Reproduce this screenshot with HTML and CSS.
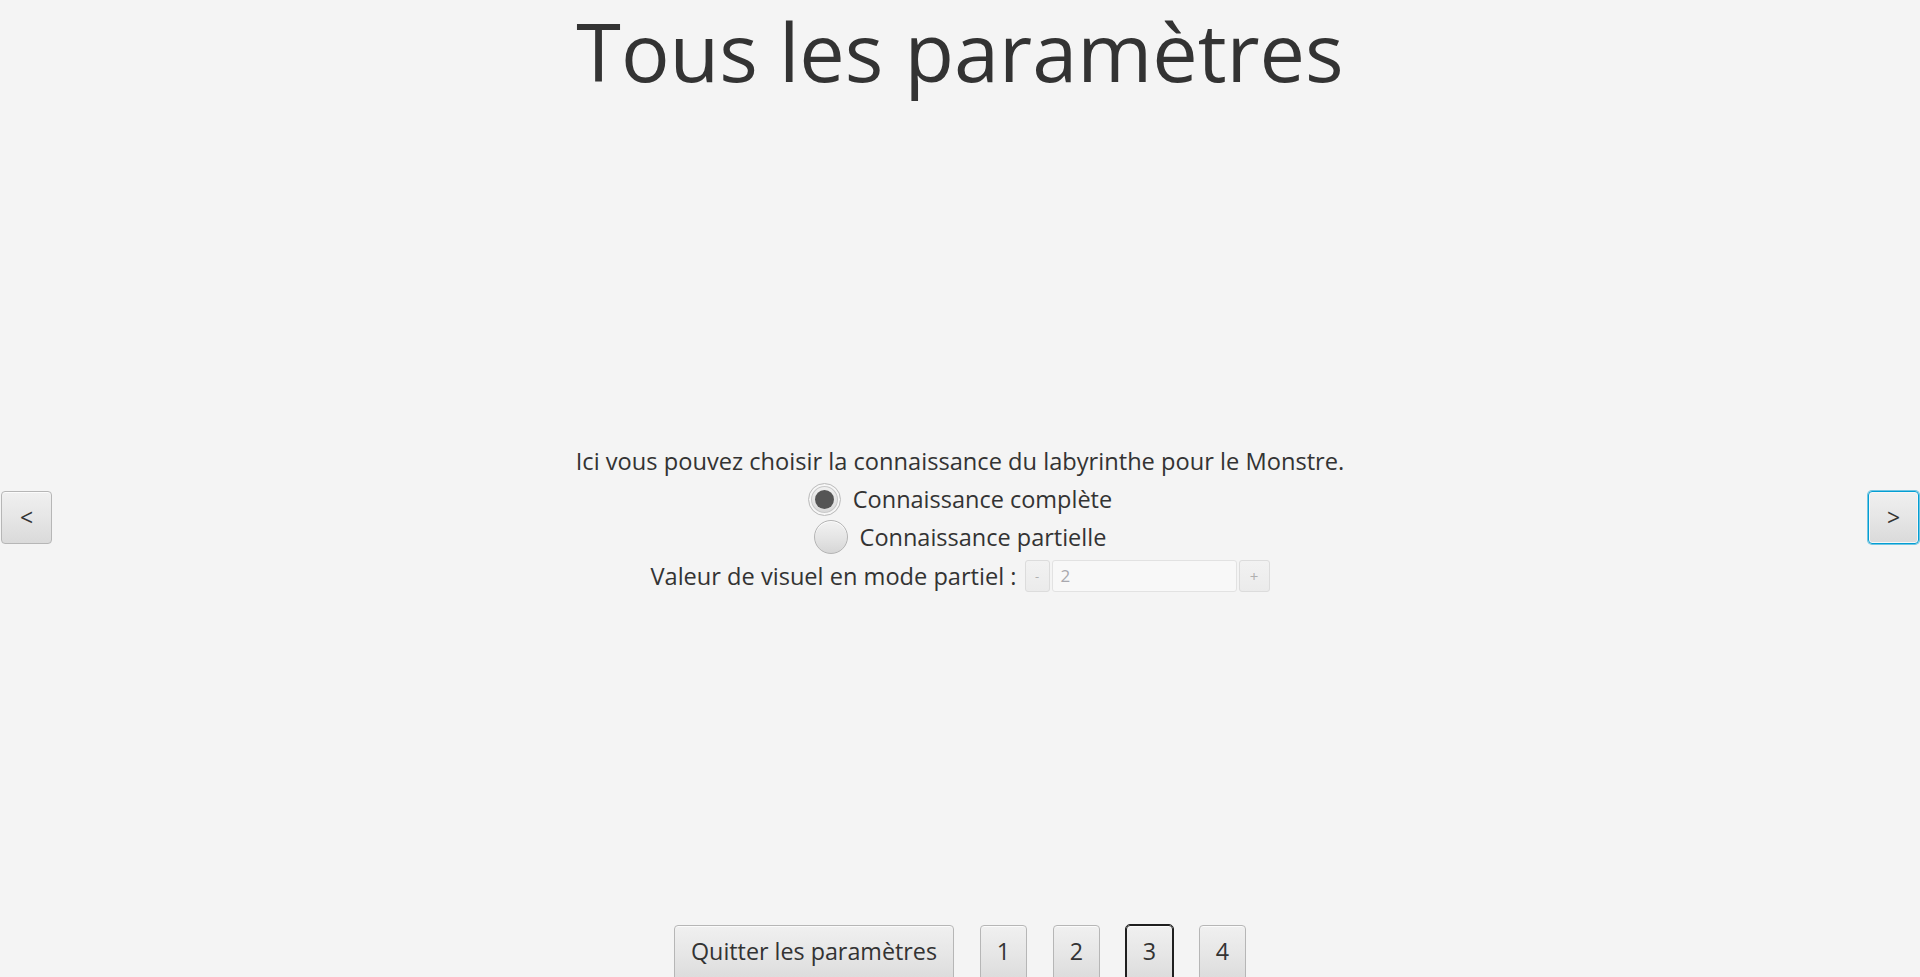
FILE: index.html
```html
<!DOCTYPE html>
<html lang="fr">
<head>
<meta charset="utf-8">
<title>Tous les paramètres</title>
<link rel="stylesheet" href="styles.css">
</head>
<body>
<div class="page">
  <header class="header">
    <h1 class="title">Tous les paramètres</h1>
  </header>
  <main class="middle">
    <button class="btn nav nav-left">&lt;</button>
    <section class="settings">
      <p class="intro">Ici vous pouvez choisir la connaissance du labyrinthe pour le Monstre.</p>
      <label class="radio-row row-complete">
        <span class="radio radio-focused"><span class="dot"></span></span>
        <span class="radio-label">Connaissance complète</span>
      </label>
      <label class="radio-row row-partial">
        <span class="radio"></span>
        <span class="radio-label">Connaissance partielle</span>
      </label>
      <div class="spinner-row">
        <span class="spinner-label">Valeur de visuel en mode partiel :</span>
        <div class="spinner">
          <span class="spin-btn spin-minus">-</span>
          <span class="spin-field">2</span>
          <span class="spin-btn spin-plus">+</span>
        </div>
      </div>
    </section>
    <button class="btn nav nav-right">&gt;</button>
  </main>
  <footer class="footer">
    <button class="btn foot-btn">Quitter les paramètres</button>
    <button class="btn foot-btn num">1</button>
    <button class="btn foot-btn num">2</button>
    <button class="btn foot-btn num current">3</button>
    <button class="btn foot-btn num">4</button>
  </footer>
</div>
</body>
</html>
```

FILE: styles.css
```css
html, body {
  margin: 0;
  padding: 0;
  background: #f4f4f4;
}

body {
  font-family: "Open Sans", "Noto Sans", sans-serif;
  color: #333333;
}

.page {
  height: 977px;
  display: flex;
  flex-direction: column;
  overflow: hidden;
}

.header {
  height: 110px;
  flex: 0 0 110px;
  display: flex;
  justify-content: center;
  align-items: flex-start;
}

.title {
  margin: 0;
  font-weight: 400;
  font-size: 81px;
  line-height: 102px;
  color: #333333;
}

.middle {
  flex: 1 1 auto;
  display: flex;
  align-items: center;
}

.btn {
  font-family: "Open Sans", "Noto Sans", sans-serif;
  color: #333333;
  border: 1px solid #b6b6b6;
  border-radius: 4px;
  background: linear-gradient(to bottom, #f0f0f0 0%, #e6e6e6 50%, #dadada 100%);
  box-shadow: inset 0 1px 0 #fbfbfb;
  padding: 0;
  cursor: pointer;
}

.nav {
  width: 51px;
  height: 53px;
  flex: 0 0 auto;
  font-size: 23px;
  line-height: 1;
}

.nav-left {
  margin-left: 1px;
}

.nav-right {
  margin-right: 1px;
  border: 1px solid #039ed3;
  box-shadow: 0 0 0 1px rgba(3, 158, 211, 0.55), inset 0 0 0 1px #f6f6f6;
}

.settings {
  flex: 1 1 auto;
  display: flex;
  flex-direction: column;
  align-items: center;
  padding-top: 0;
}

.intro {
  margin: 0;
  font-size: 23.65px;
  line-height: 34px;
  height: 34px;
}

.radio-row {
  display: flex;
  align-items: center;
  gap: 12px;
  height: 37px;
  font-size: 23.5px;
}

.row-complete {
  margin-top: 3px;
}

.row-partial {
  margin-top: 1px;
}

.radio {
  box-sizing: border-box;
  width: 34px;
  height: 34px;
  border-radius: 50%;
  border: 1px solid #b4b4b4;
  background: linear-gradient(to bottom, #f2f2f2 0%, #e4e4e4 55%, #d6d6d6 100%);
  box-shadow: inset 0 1px 0 #fcfcfc;
  display: flex;
  align-items: center;
  justify-content: center;
}

.radio-focused {
  width: 33px;
  height: 33px;
  border-color: #bdbdbd;
  box-shadow: inset 0 0 0 2px #f7f7f7, inset 0 0 0 3px #c9c9c9;
}

.dot {
  width: 19px;
  height: 19px;
  border-radius: 50%;
  background: #555555;
}

.radio-label {
  line-height: 34px;
}

.spinner-row {
  display: flex;
  align-items: center;
  gap: 8px;
  margin-top: 4px;
  height: 32px;
}

.spinner-label {
  font-size: 23.6px;
  line-height: 32px;
}

.spinner {
  display: flex;
  height: 32px;
  gap: 2px;
}

.spin-btn {
  box-sizing: border-box;
  height: 32px;
  border: 1px solid #dcdcdc;
  border-radius: 3px;
  background: linear-gradient(to bottom, #f2f2f2, #ebebeb);
  color: #b0b0b0;
  font-size: 13px;
  display: flex;
  align-items: center;
  justify-content: center;
}

.spin-minus {
  width: 25px;
}

.spin-plus {
  width: 31px;
  font-size: 15px;
}

.spin-field {
  box-sizing: border-box;
  width: 185px;
  height: 32px;
  border: 1px solid #e2e2e2;
  border-radius: 3px;
  background: #f8f8f8;
  color: #a8a8ae;
  font-size: 17px;
  line-height: 30px;
  padding-left: 8px;
}

.footer {
  height: 52px;
  flex: 0 0 52px;
  display: flex;
  justify-content: center;
  align-items: flex-start;
  gap: 26px;
}

.foot-btn {
  height: 60px;
  font-size: 23.3px;
  line-height: 34px;
  padding: 8px 16px 16px;
  align-self: flex-start;
}

.num {
  width: 47px;
  padding-left: 0;
  padding-right: 0;
}

.current {
  border-color: #1f1f1f;
  outline: 1px solid #1f1f1f;
}
```
